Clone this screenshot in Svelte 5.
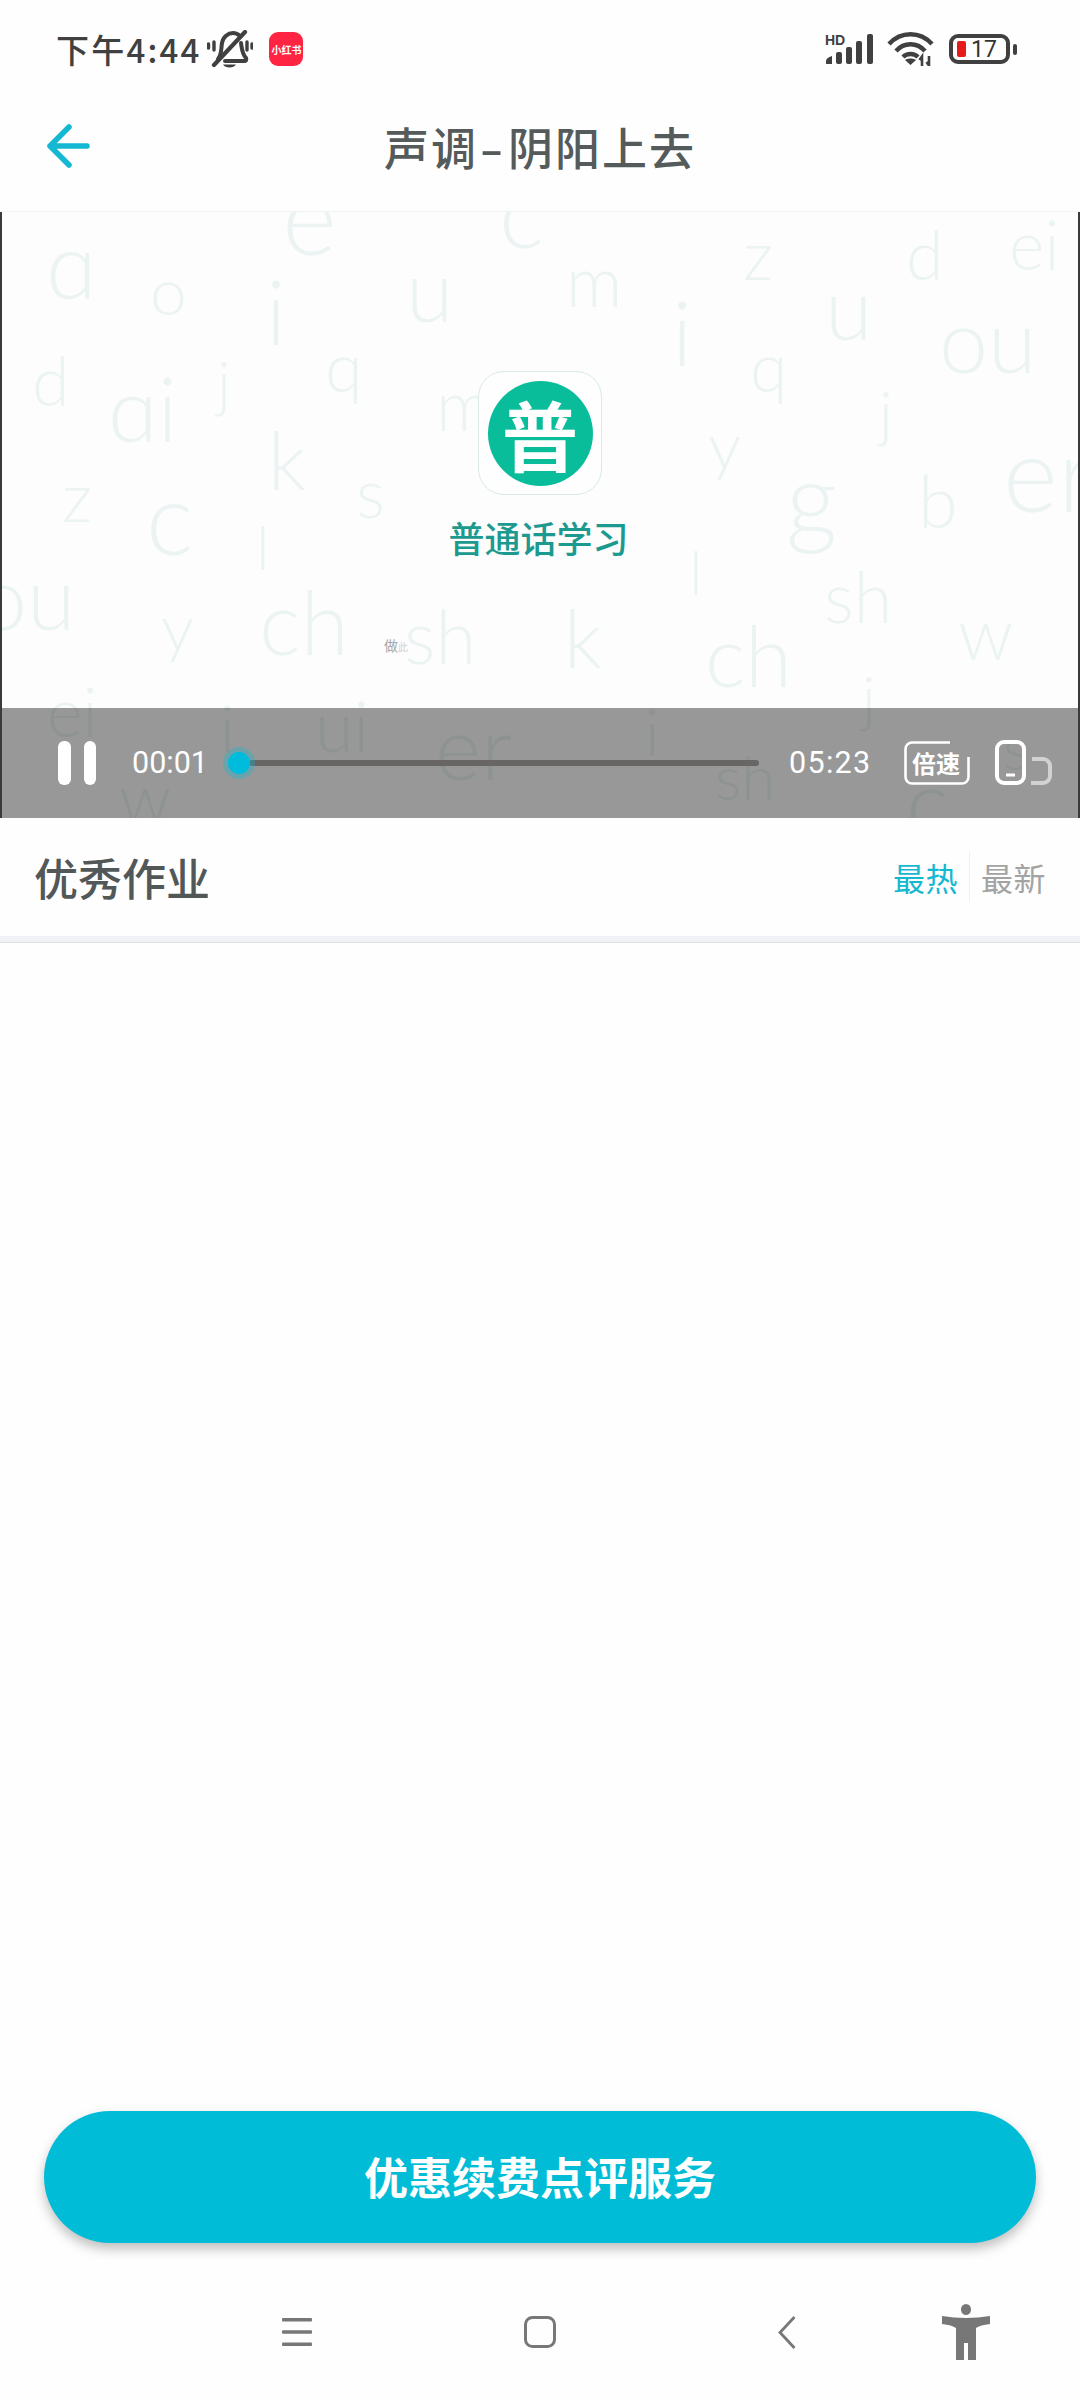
<script>
  // watermark letters on the video frame: [text, left, baseline, size]
  const letters = [
    ['e', 282, 255, 105], ['c', 499, 248, 95], ['ɑ', 46, 300, 92], ['o', 150, 316, 66],
    ['i', 266, 345, 90], ['u', 406, 322, 86], ['d', 32, 406, 68], ['ɑi', 108, 442, 90],
    ['j', 217, 405, 62], ['q', 325, 392, 68], ['m', 436, 431, 70], ['m', 566, 307, 70],
    ['z', 743, 280, 68], ['d', 906, 280, 68], ['ei', 1009, 270, 68], ['i', 672, 366, 90],
    ['u', 825, 340, 86], ['q', 750, 392, 68], ['ou', 939, 373, 88], ['j', 879, 435, 62],
    ['y', 708, 470, 66], ['k', 268, 490, 80], ['s', 356, 518, 68], ['z', 62, 522, 68],
    ['c', 146, 555, 100], ['l', 256, 570, 62], ['g', 786, 535, 100], ['b', 918, 528, 72],
    ['er', 1003, 512, 105], ['ou', -22, 630, 88], ['y', 161, 652, 66], ['ch', 259, 655, 88],
    ['sh', 404, 665, 74], ['k', 564, 668, 80], ['l', 689, 595, 62], ['sh', 824, 623, 70],
    ['w', 958, 660, 72], ['ch', 705, 687, 85], ['j', 862, 720, 62], ['ei', 47, 737, 68],
    ['i', 220, 753, 66], ['ui', 315, 752, 70], ['er', 435, 780, 88], ['w', 119, 823, 68],
    ['i', 645, 757, 66], ['sh', 715, 800, 62], ['s', 1003, 770, 60], ['c', 906, 835, 90],
  ];

  const place = ([, x, base, size]) =>
    `left:${x}px;top:${base - 212 - size * 0.887}px;font-size:${size}px`;
</script>

<div class="page">
  <div class="status">
    <div class="status-left">
      <span class="clock">下午4:44</span>
      <svg class="bell" width="46" height="38" viewBox="0 0 46 38" fill="none" stroke="#404040" stroke-width="4" stroke-linecap="round">
        <path d="M11 29 C15 24 14 18 15 13 C16 7 21 3 26 3 C29 3 31 4 33 6" />
        <path d="M34 13 C35 19 35 24 39 28 C40 30 39 31 37 31 H18" />
        <path d="M7 35 L38 2" stroke-width="4.2" />
        <path d="M7 12 V20 M1.5 14 V18 M40 12 V20 M45 14 V18" stroke-width="3.4" />
        <path d="M16 34.5 H29 C27 38.5 18 38.5 16 34.5 Z" fill="#404040" stroke="none" />
      </svg>
      <span class="rednote">小红书</span>
    </div>
    <div class="status-right">
      <svg width="50" height="31" viewBox="0 0 50 31">
        <text x="0" y="10.5" class="hd">HD</text>
        <g fill="#404040">
          <path d="M1 30 V27 Q1 24 7 22 V30 Z" />
          <rect x="11" y="18" width="6" height="12" rx="2" />
          <rect x="21" y="13" width="6" height="17" rx="2" />
          <rect x="31" y="7" width="6" height="23" rx="2" />
          <rect x="42" y="0" width="6" height="30" rx="2" />
        </g>
      </svg>
      <svg width="47" height="34" viewBox="0 0 47 34" fill="none" stroke="#404040" stroke-width="4.4">
        <path d="M2 12 C14 -1 33 -1 45 12" />
        <path d="M9 19 C17 10 30 10 38 19" />
        <path d="M16 25 C20 21 27 21 31 25" />
        <path d="M23.5 33 L18 28 C21 26 26 26 29 28 Z" fill="#404040" stroke="none" />
        <path d="M35 34 V25 M32.5 28 L35 24.5 L35 29 M42 24 V33 M39.5 30 L42 33.5 L42 29" stroke-width="2.6" />
      </svg>
      <div class="battery">
        <div class="battery-body">
          <span class="battery-level"></span>
          <span class="battery-num">17</span>
        </div>
        <span class="battery-tip"></span>
      </div>
    </div>
  </div>

  <header class="header">
    <svg class="back" width="44" height="44" viewBox="0 0 44 44" fill="none" stroke="#14b8d3" stroke-width="5.5" stroke-linecap="round" stroke-linejoin="round">
      <path d="M41 22 H4 M23 3 L4 22 L23 41" />
    </svg>
    <h1>声调<span class="dash">-</span>阴阳上去</h1>
  </header>

  <section class="video">
    {#each letters as l}
      <span class="letter" style={place(l)}>{l[0]}</span>
    {/each}

    <div class="brand">
      <div class="logo">
        <div class="logo-disc">普</div>
      </div>
      <div class="brand-name">普通话学习</div>
    </div>
    <span class="hint">做<i>此</i></span>

    <div class="controls">
      <div class="pause"><span></span><span></span></div>
      <span class="time now">00:01</span>
      <div class="slider">
        <span class="track"></span>
        <span class="thumb"></span>
      </div>
      <span class="time total">05:23</span>
      <svg class="speed" width="67" height="44" viewBox="0 0 67 44" fill="none" stroke="#fff" stroke-width="2.6">
        <path d="M46 1.5 H8 A6.5 6.5 0 0 0 1.5 8 V36 A6.5 6.5 0 0 0 8 42.5 H58 A6.5 6.5 0 0 0 64.5 36 V16" />
        <text x="32" y="32" class="speed-label">倍速</text>
      </svg>
      <svg class="rotate" width="58" height="45" viewBox="0 0 58 45" fill="none" stroke-width="4">
        <rect x="2" y="2" width="27" height="41" rx="7" stroke="#fff" />
        <path d="M11 35 H20" stroke="#fff" stroke-width="3" />
        <path d="M37 19 H48 A7 7 0 0 1 55 26 V36 A7 7 0 0 1 48 43 H36" stroke="#d2d2d2" />
      </svg>
    </div>
  </section>

  <div class="section-head">
    <h2>优秀作业</h2>
    <div class="tabs">
      <span class="tab active">最热</span>
      <span class="tab">最新</span>
    </div>
  </div>
  <div class="rule"></div>

  <div class="list"></div>

  <button class="renew">优惠续费点评服务</button>

  <nav class="nav">
    <svg class="nav-menu" width="30" height="28" viewBox="0 0 30 28" fill="#777">
      <rect width="30" height="3.4" rx="1" />
      <rect y="12.3" width="30" height="3.4" rx="1" />
      <rect y="24.6" width="30" height="3.4" rx="1" />
    </svg>
    <svg class="nav-home" width="32" height="32" viewBox="0 0 32 32" fill="none" stroke="#777" stroke-width="3">
      <rect x="1.5" y="1.5" width="29" height="29" rx="7" />
    </svg>
    <svg class="nav-back" width="18" height="33" viewBox="0 0 18 33" fill="none" stroke="#777" stroke-width="2.8">
      <path d="M16.5 1 L2 16.5 L16.5 32" />
    </svg>
    <svg class="nav-access" width="48" height="56" viewBox="0 0 48 56" fill="#777">
      <ellipse cx="24" cy="5.5" rx="5" ry="5.5" />
      <path d="M0 12 Q12 14 24 14 Q36 14 48 12 V20 Q38 21 34 24 V56 H26 V39 H22 V56 H14 V24 Q10 21 0 20 Z" />
    </svg>
  </nav>
</div>

<style>
  :global(body) {
    background: #fefefe;
    font-family: "Noto Sans CJK SC", "Noto Sans", sans-serif;
  }

  .page {
    display: flex;
    flex-direction: column;
    height: 2400px;
    overflow: hidden;
  }

  .status {
    display: flex;
    align-items: center;
    justify-content: space-between;
    height: 98px;
    margin-bottom: 2px;
    padding: 0 63px 0 56px;
    box-sizing: border-box;
  }

  .status-left {
    display: flex;
    align-items: center;
  }

  .clock {
    font-size: 33px;
    font-weight: 500;
    letter-spacing: 2.2px;
    color: #404040;
    line-height: 1;
  }

  .bell {
    margin-left: 6px;
  }

  .rednote {
    display: flex;
    align-items: center;
    justify-content: center;
    width: 34px;
    height: 34px;
    margin-left: 16px;
    border-radius: 9px;
    background: #ff2442;
    color: #fff;
    font-size: 10px;
    font-weight: 700;
    white-space: nowrap;
  }

  .status-right {
    display: flex;
    align-items: center;
    gap: 12px;
  }

  .hd {
    font-family: "Liberation Sans", sans-serif;
    font-size: 14px;
    font-weight: 700;
    fill: #404040;
  }

  .battery {
    display: flex;
    align-items: center;
    gap: 3px;
    margin-left: 3px;
  }

  .battery-body {
    display: flex;
    align-items: center;
    width: 61px;
    height: 30px;
    padding-left: 4px;
    box-sizing: border-box;
    border: 4px solid #404040;
    border-radius: 9px;
  }

  .battery-level {
    width: 9px;
    height: 16px;
    border-radius: 2px;
    background: #e51a1a;
  }

  .battery-num {
    margin-left: 5px;
    font-family: Roboto, sans-serif;
    font-size: 23px;
    font-weight: 400;
    color: #333;
    line-height: 1;
  }

  .battery-tip {
    width: 4px;
    height: 11px;
    border-radius: 2px;
    background: #404040;
  }

  .header {
    position: relative;
    display: flex;
    align-items: center;
    justify-content: center;
    height: 112px;
    box-sizing: border-box;
    border-bottom: 1px solid #f1f1f1;
  }

  .back {
    position: absolute;
    left: 46px;
    top: 24px;
  }

  h1 {
    margin: 0 0 19px;
    font-size: 45px;
    font-weight: 500;
    letter-spacing: 2px;
    color: #555b5b;
    line-height: 1;
  }

  .dash {
    display: inline-block;
    margin: 0 6px;
    transform: scaleX(1.5);
  }

  .video {
    position: relative;
    height: 606px;
    overflow: hidden;
    box-sizing: border-box;
    background: #fdfdfd;
    border-left: 2px solid #3a3a3a;
    border-right: 2px solid #3a3a3a;
  }

  .letter {
    position: absolute;
    margin-left: -2px;
    font-family: Lato, "DejaVu Sans", sans-serif;
    font-weight: 300;
    line-height: 1;
    color: #ecf4f3;
    white-space: nowrap;
  }

  .brand {
    position: absolute;
    left: 0;
    right: 0;
    top: 159px;
    display: flex;
    flex-direction: column;
    align-items: center;
  }

  .logo {
    display: flex;
    align-items: center;
    justify-content: center;
    width: 124px;
    height: 124px;
    box-sizing: border-box;
    border: 1px solid #d8ebe8;
    border-radius: 26px;
    background: #fefefe;
  }

  .logo-disc {
    display: flex;
    align-items: center;
    justify-content: center;
    width: 105px;
    height: 105px;
    border-radius: 50%;
    background: #09bd9b;
    color: #fff;
    font-size: 76px;
    font-weight: 700;
    line-height: 1;
  }

  .brand-name {
    margin-top: 21px;
    margin-right: 3px;
    font-size: 36px;
    font-weight: 500;
    line-height: 1.2;
    color: #1c9a8f;
    white-space: nowrap;
  }

  .hint {
    position: absolute;
    left: 382px;
    top: 426px;
    font-size: 14px;
    line-height: 1;
    color: #a8a8a8;
  }

  .hint i {
    font-style: normal;
    font-size: 10px;
    opacity: 0.5;
  }

  .controls {
    position: absolute;
    left: 0;
    right: 0;
    bottom: 0;
    display: flex;
    align-items: center;
    height: 110px;
    padding-left: 56px;
    background: rgba(0, 0, 0, 0.4);
  }

  .pause {
    display: flex;
    gap: 13px;
  }

  .pause span {
    width: 12.5px;
    height: 44px;
    border-radius: 6px;
    background: #fff;
  }

  .time {
    font-family: Roboto, sans-serif;
    font-size: 30.5px;
    line-height: 1;
    color: #fff;
  }

  .now {
    width: 75px;
    margin-left: 36px;
  }

  .slider {
    position: relative;
    display: flex;
    align-items: center;
    width: 536px;
    height: 32px;
    margin-left: 16px;
  }

  .track {
    width: 100%;
    height: 6px;
    margin-left: 26px;
    border-radius: 3px;
    background: #686565;
  }

  .thumb {
    position: absolute;
    left: 5px;
    top: 5px;
    width: 22px;
    height: 22px;
    border-radius: 50%;
    background: #00bcdc;
    box-shadow: 0 0 0 5px rgba(0, 188, 220, 0.3);
  }

  .total {
    margin-left: 30px;
    letter-spacing: 1.3px;
  }

  .speed {
    margin-left: 33px;
  }

  .speed-label {
    font-size: 24px;
    font-weight: 700;
    text-anchor: middle;
    fill: #fff;
    stroke: none;
  }

  .rotate {
    margin-left: 24px;
    margin-top: -1px;
  }

  .section-head {
    display: flex;
    align-items: center;
    justify-content: space-between;
    height: 118px;
    padding: 0 34px;
    box-sizing: border-box;
  }

  h2 {
    margin: 0;
    font-size: 44px;
    font-weight: 500;
    color: #525858;
    line-height: 1;
  }

  .tabs {
    display: flex;
    align-items: center;
  }

  .tab {
    display: flex;
    align-items: center;
    height: 50px;
    font-size: 32px;
    letter-spacing: 0.5px;
    color: #a3a3a3;
  }

  .tab.active {
    padding-right: 11px;
    margin-right: 11px;
    border-right: 1px solid #f0f0f0;
    color: #14b8d0;
  }

  .rule {
    height: 6px;
    background: #f1f2f5;
    border-bottom: 1px solid #dfdfdf;
  }

  .list {
    flex: 1;
  }

  .renew {
    display: block;
    flex: none;
    height: 132px;
    margin: 0 44px;
    padding: 0 0 3px;
    border: none;
    border-radius: 66px;
    background: #00bcd6;
    box-shadow: 0 6px 12px rgba(0, 0, 0, 0.25);
    color: #fff;
    font-family: inherit;
    font-size: 44px;
    font-weight: 700;
  }

  .nav {
    position: relative;
    flex: none;
    height: 157px;
  }

  .nav svg {
    position: absolute;
  }

  .nav-menu {
    left: 282px;
    top: 75px;
  }

  .nav-home {
    left: 524px;
    top: 73px;
  }

  .nav-back {
    left: 778px;
    top: 73px;
  }

  .nav-access {
    left: 942px;
    top: 61px;
  }
</style>
